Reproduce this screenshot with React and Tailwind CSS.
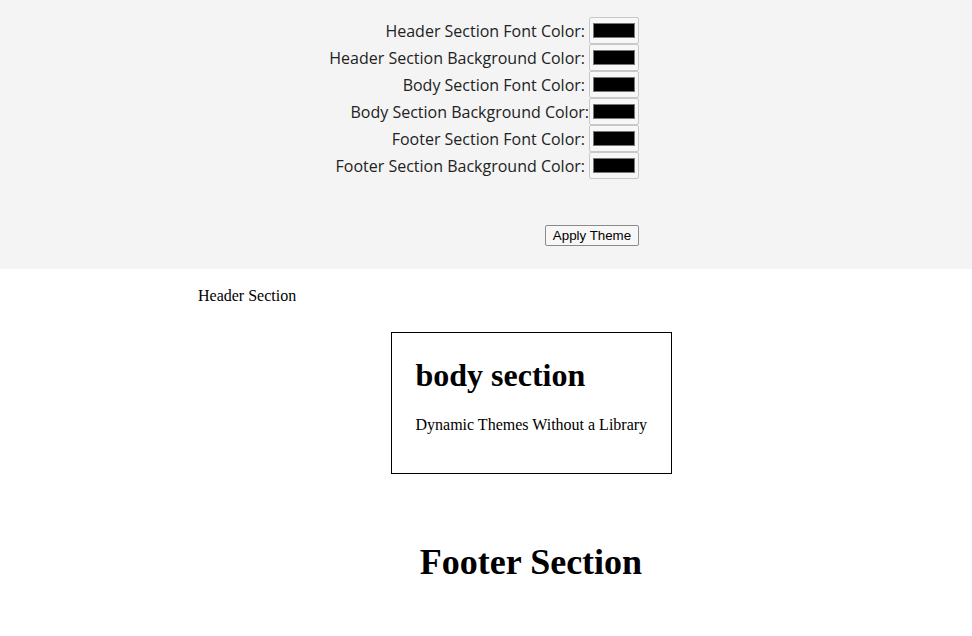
import React from "react";

const fields = [
  { label: "Header Section Font Color:", tight: false },
  { label: "Header Section Background Color:", tight: false },
  { label: "Body Section Font Color:", tight: false },
  { label: "Body Section Background Color:", tight: true },
  { label: "Footer Section Font Color:", tight: false },
  { label: "Footer Section Background Color:", tight: false },
];

function ColorSwatch() {
  return (
    <div className="w-[50px] h-[27px] border border-[#c8c8c8] bg-[#f7f7f7] rounded-[2px] flex items-center justify-center">
      <div className="w-[42px] h-[15px] bg-black border border-[#777]" />
    </div>
  );
}

export default function App() {
  return (
    <div className="min-h-screen bg-white">
      {/* theme picker */}
      <div className="h-[269px] bg-[#f4f4f4] pt-[17px]">
        <div className="w-[639px] flex flex-col items-end">
          {fields.map((f) => (
            <div key={f.label} className="h-[27px] flex items-center justify-end">
              <span
                className={
                  "font-['Open_Sans',sans-serif] text-[16px] text-[#222] " +
                  (f.tight ? "pr-0" : "pr-[4px]")
                }
              >
                {f.label}
              </span>
              <ColorSwatch />
            </div>
          ))}
          <button className="mt-[46px] w-[94px] h-[21px] border border-[#8a8a8a] rounded-[2px] bg-[#f7f7f7] font-['Liberation_Sans',Arial,sans-serif] text-[13.33px] text-black leading-none">
            Apply Theme
          </button>
        </div>
      </div>

      {/* themed sections */}
      <div className="font-['Liberation_Serif','Times_New_Roman',serif] text-black">
        <div className="ml-[168px] pl-[30px] pt-[15px] text-[16px] leading-[24px]">
          Header Section
        </div>

        <div className="ml-[90px] flex justify-center mt-[24px]">
          <div className="w-[281px] h-[142px] border border-black pt-[24px] pl-[24px]">
            <h1 className="text-[32px] font-bold leading-[37px]">body section</h1>
            <p className="mt-[19px] text-[16px] leading-[24px]">
              Dynamic Themes Without a Library
            </p>
          </div>
        </div>

        <div className="ml-[90px] flex justify-center mt-[68px]">
          <h1 className="text-[36px] font-bold leading-[41px]">Footer Section</h1>
        </div>
      </div>
    </div>
  );
}
